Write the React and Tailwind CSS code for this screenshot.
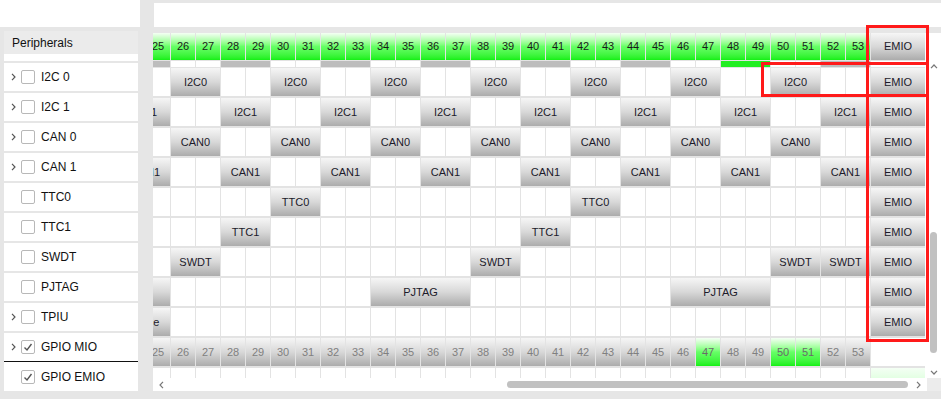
import React from 'react';

const F = "font-['Liberation_Sans',Arial,sans-serif]";
const START = 22;
const END = 53;
const SPAN = { 1: 'col-span-1', 2: 'col-span-2', 4: 'col-span-4' };

const BTN = 'bg-linear-to-b from-[#f6f6f6] via-[#d8d8d8] to-[#acacac] text-[#1c1a2a]';
const GREEN = 'bg-linear-to-b from-[#f4fff4] via-[#66ff66] to-[#12f012]';

function every(starts, span, label, cls = BTN) {
  const o = {};
  starts.forEach((s) => (o[s] = { span, label, cls }));
  return o;
}

function Row({ h, segs = {}, fill, emio, mt }) {
  const cells = [];
  for (let c = START; c <= END; ) {
    const s = segs[c];
    if (s) {
      cells.push(
        <div
          key={c}
          className={`${SPAN[s.span]} ${s.cls} flex items-center justify-center text-[11px] leading-none overflow-hidden whitespace-nowrap`}
        >
          {s.label}
        </div>
      );
      c += s.span;
    } else {
      cells.push(fill ? fill(c) : <div key={c} className="bg-white" />);
      c++;
    }
  }
  cells.push(
    <div key="emio" className={`${emio} flex items-center justify-center text-[11px] leading-none`}>
      {emio && emio.includes('from-[#f6f6f6]') ? 'EMIO' : ''}
    </div>
  );
  return <div className={`grid grid-cols-[repeat(32,24px)_54px] gap-x-px ${h} ${mt}`}>{cells}</div>;
}

const periph = [
  { name: 'I2C 0', chev: true },
  { name: 'I2C 1', chev: true },
  { name: 'CAN 0', chev: true },
  { name: 'CAN 1', chev: true },
  { name: 'TTC0' },
  { name: 'TTC1' },
  { name: 'SWDT' },
  { name: 'PJTAG' },
  { name: 'TPIU', chev: true },
  { name: 'GPIO MIO', chev: true, checked: true },
  { name: 'GPIO EMIO', checked: true, last: true },
];

function Chev() {
  return (
    <svg width="5" height="8" viewBox="0 0 5 8">
      <path d="M1 0.8 L4 4 L1 7.2" fill="none" stroke="#555" strokeWidth="1.2" />
    </svg>
  );
}

function Check({ checked }) {
  return (
    <div className="w-[14px] h-[14px] border border-[#b8b8b8] rounded-[2px] bg-white flex items-center justify-center">
      {checked && (
        <svg width="12" height="12" viewBox="0 0 12 12">
          <path d="M2.5 6.5 L5 9 L9.5 3" fill="none" stroke="#555" strokeWidth="1.4" />
        </svg>
      )}
    </div>
  );
}

function Arrow({ d, w = 8, h = 5 }) {
  return (
    <svg width={w} height={h} viewBox={`0 0 ${w} ${h}`}>
      <path d={d} fill="none" stroke="#777" strokeWidth="1.2" />
    </svg>
  );
}

const EMIO_BTN = 'bg-linear-to-b from-[#f6f6f6] via-[#d8d8d8] to-[#acacac] text-[#1c1a2a]';

export default function App() {
  const header = (c) => (
    <div key={c} className={`${GREEN} flex items-center justify-center text-[11px] text-[#1a1a1a] leading-none`}>
      {c}
    </div>
  );
  const greens = [47, 50, 51];
  const numRow = (c) => (
    <div
      key={c}
      className={`${greens.includes(c) ? GREEN + ' text-[#6a6a6a]' : 'bg-linear-to-b from-[#f6f6f6] via-[#d8d8d8] to-[#acacac] text-[#808080]'} flex items-center justify-center text-[11px] leading-none`}
    >
      {c}
    </div>
  );

  const bars = {};
  [24, 28, 32, 36, 40, 44, 52].forEach((s) => (bars[s] = { span: 2, label: '', cls: 'bg-[#bdbdbd]' }));
  bars[48] = { span: 2, label: '', cls: 'bg-[#22ee22]' };

  const rows = [
    every([26, 30, 34, 38, 42, 46, 50], 2, 'I2C0'),
    every([24, 28, 32, 36, 40, 44, 48, 52], 2, 'I2C1'),
    every([26, 30, 34, 38, 42, 46, 50], 2, 'CAN0'),
    every([24, 28, 32, 36, 40, 44, 48, 52], 2, 'CAN1'),
    every([30, 42], 2, 'TTC0'),
    every([28, 40], 2, 'TTC1'),
    every([26, 38, 50, 52], 2, 'SWDT'),
    every([22, 34, 46], 4, 'PJTAG'),
    every([24], 2, 'Trace'),
  ];

  return (
    <div className={`${F} relative w-[941px] h-[399px] bg-[#e6e6e6] flex overflow-hidden`}>
      {/* Left column */}
      <div className="w-[140px] shrink-0 flex flex-col">
        <div className="h-[27px] bg-white" />
        <div className="mt-[4px] ml-[4px] w-[134px] h-[360px] bg-white flex flex-col">
          <div className="h-[23px] bg-[#ebebeb] pl-[8px] flex items-center text-[12px] text-[#111]">Peripherals</div>
          <div className="h-[7px]" />
          {periph.map((p) => (
            <div
              key={p.name}
              className={`h-[30px] flex items-center ${p.last ? 'border-t-[1.5px] border-[#111]' : 'border-t-2 border-[#e6e6e6]'}`}
            >
              <div className="w-[17px] pl-[7px] flex items-center">{p.chev && <Chev />}</div>
              <Check checked={p.checked} />
              <span className="ml-[6px] text-[12px] text-[#111] leading-none">{p.name}</span>
            </div>
          ))}
        </div>
      </div>

      {/* Right column */}
      <div className="ml-[13px] w-[788px] flex flex-col">
        <div className="mt-[3px] h-[24px] bg-white ml-px" />
        <div className="mt-[6px] h-[358px] bg-white flex flex-col">
          <div className="flex h-[345px]">
            <div className="w-[774px] h-[345px] overflow-hidden bg-white">
              <div className="-ml-[82px] w-max flex flex-col bg-[#e3e3e3]">
                <Row h="h-[27px]" fill={header} emio={EMIO_BTN} />
                <Row h="h-[6px]" mt="mt-px" segs={bars} emio="bg-white" />
                {rows.map((segs, i) => (
                  <Row key={i} h="h-[28px]" mt={i === 0 ? 'mt-px' : 'mt-[2px]'} segs={segs} emio={EMIO_BTN} />
                ))}
                <Row h="h-[28px]" mt="mt-[2px]" fill={numRow} emio="bg-white" />
                <Row h="h-[28px]" mt="mt-[2px]" emio="bg-linear-to-b from-[#f4fff4] to-[#c4ffc4]" />
              </div>
            </div>
            <div className="w-[14px] flex flex-col bg-white">
              <div className="h-[27px]" />
              <div className="h-[12px] flex items-center justify-center">
                <Arrow d="M1 4.2 L4 1 L7 4.2" />
              </div>
              <div className="h-[160px]" />
              <div className="ml-[3px] w-[7px] h-[121px] rounded-full bg-[#c1c1c1]" />
              <div className="flex-1" />
              <div className="h-[12px] flex items-center justify-center">
                <Arrow d="M1 0.8 L4 4 L7 0.8" />
              </div>
            </div>
          </div>
          <div className="flex h-[13px]">
            <div className="w-[774px] bg-white flex items-center">
              <div className="ml-[6px] flex items-center">
                <Arrow w={5} h={8} d="M4 0.8 L1 4 L4 7.2" />
              </div>
              <div className="ml-[343px] w-[401px] h-[7px] rounded-full bg-[#c1c1c1]" />
              <div className="ml-[8px] flex items-center">
                <Arrow w={5} h={8} d="M1 0.8 L4 4 L1 7.2" />
              </div>
            </div>
            <div className="w-[14px] bg-[#ececec]" />
          </div>
        </div>
      </div>

      {/* annotations */}
      <div className="absolute left-[866px] top-[25px] w-[63px] h-[317px] border-[3px] border-[#ff1a1a]" />
      <div className="absolute left-[761px] top-[62px] w-[168px] h-[35px] border-[3px] border-[#ff1a1a]" />
    </div>
  );
}
